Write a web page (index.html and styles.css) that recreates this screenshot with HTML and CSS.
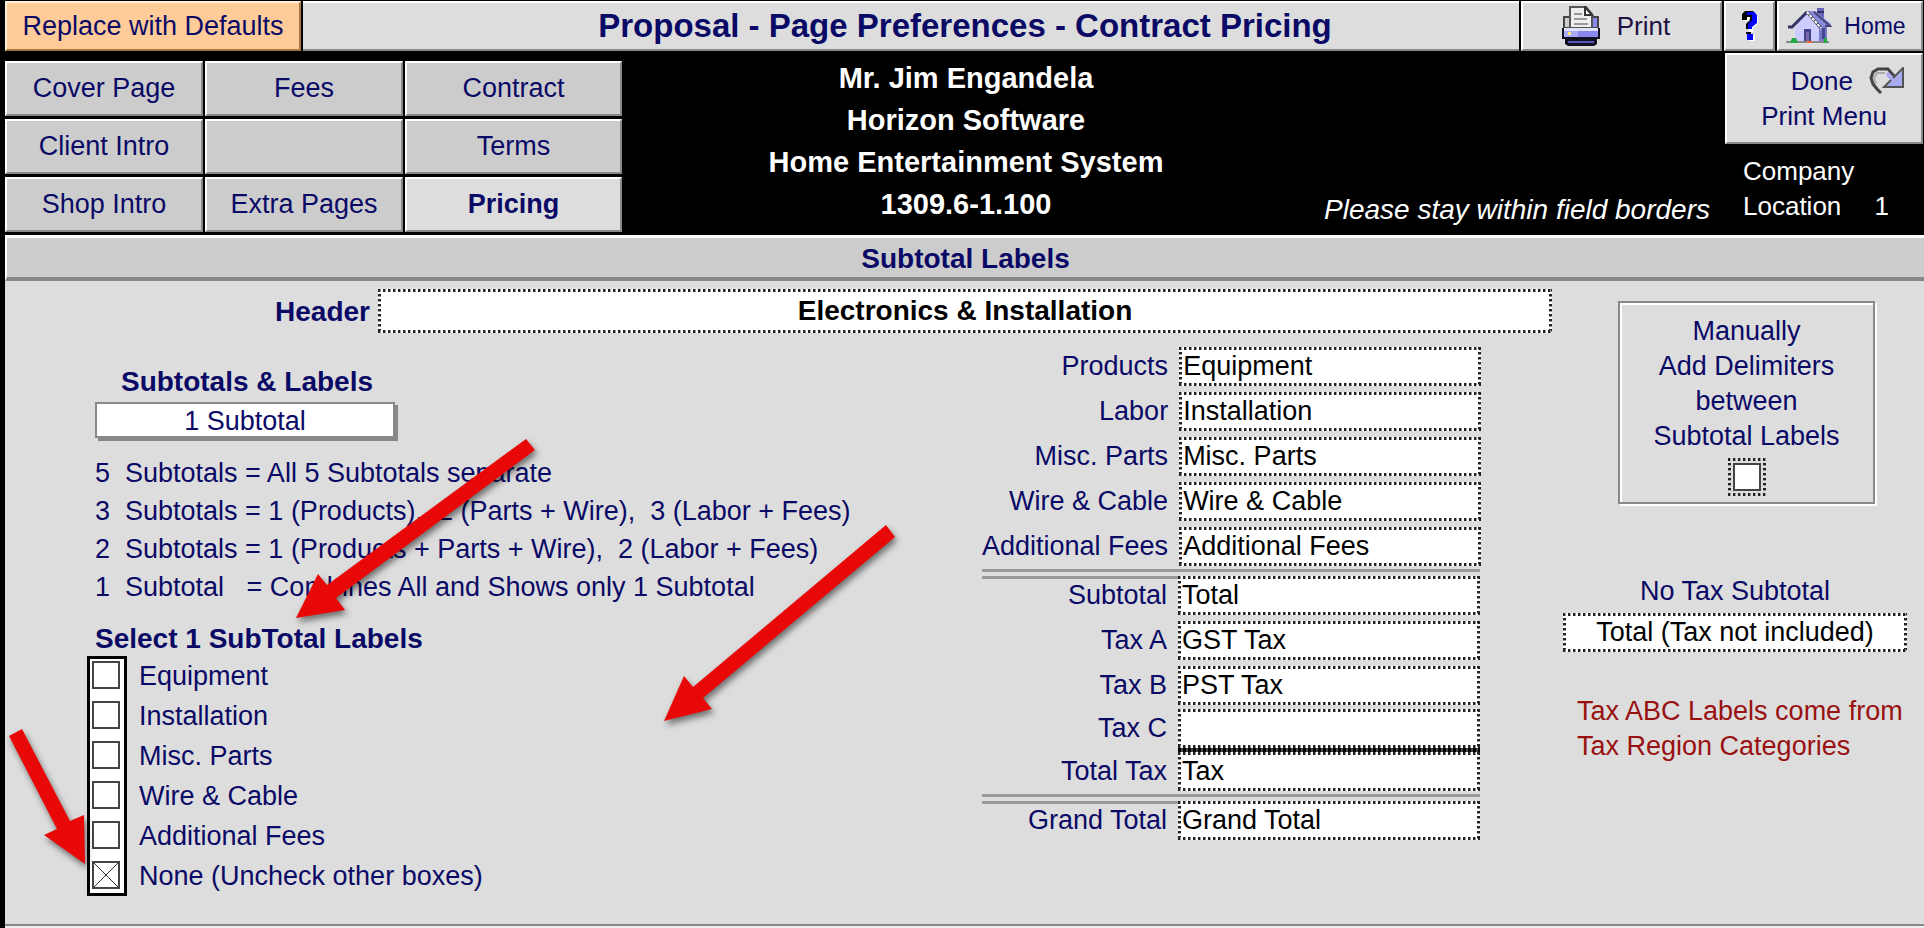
FILE: index.html
```html
<!DOCTYPE html>
<html lang="en">
<head>
    <meta charset="UTF-8">
    <meta name="viewport" content="width=device-width, initial-scale=1.0">
    <title>Proposal - Page Preferences - Contract Pricing</title>
    <link rel="stylesheet" href="styles.css">
</head>
<body>
    <header class="topbar">
        <button class="btn btn-defaults">Replace with Defaults</button>
        <h1 class="title">Proposal - Page Preferences - Contract Pricing</h1>
        <button class="btn btn-light btn-print">
            <svg class="icon" width="40" height="40" viewBox="0 0 40 40" aria-hidden="true">
                <path d="M3 11h6v11H3z" fill="#ccc" stroke="#444" stroke-width="2"/>
                <path d="M31 11h6v11h-6z" fill="#8888ee" stroke="#444" stroke-width="2"/>
                <path d="M9 1h16l6 7v14H9z" fill="#eee" stroke="#555" stroke-width="2"/>
                <path d="M24 1v8h7z" fill="#fff" stroke="#333" stroke-width="2"/>
                <path d="M13 8h8M13 13h13M13 18h14" stroke="#999" stroke-width="2"/>
                <path d="M1 22h38v11h-3v5l-3 2H7l-3-2v-5H1z" fill="#111122"/>
                <path d="M3 22h34v3H3z" fill="#e0e0ff"/>
                <path d="M3 25h34v6H3z" fill="#8888ee"/>
                <path d="M3 25h14v6H3z" fill="#aaaaff"/>
                <path d="M7 35h26v2H7z" fill="#5555bb"/>
                <path d="M7 26h3v3H7z" fill="#ffee66"/>
            </svg>
            Print
        </button>
        <button class="btn btn-light btn-help" aria-label="Help">
            <svg class="icon" width="18" height="32" viewBox="0 0 18 32" aria-hidden="true">
                <path d="M3 9V6l3-3h8l3 3v8l-5 4v4H8v-6l4-4V8H8v3H3zM8 25h6v6H8z" fill="#fff"/>
                <path d="M1 8V4l3-3h8l3 3v8l-5 4v3H5v-5l4-4V7H6v3H1zM5 22h5v2H5z" fill="#000"/>
                <path d="M6 2h7l3 3v8l-5 4v2H7v-5l4-4V5H6zM6 24h6v6H6z" fill="#0000ff"/>
            </svg>
        </button>
        <button class="btn btn-light btn-home">
            <svg class="icon" width="46" height="36" viewBox="0 0 46 36" aria-hidden="true">
                <path d="M31 0h7v16h-7z" fill="#6666bb"/>
                <path d="M31 4h7" stroke="#333366" stroke-width="2"/>
                <path d="M32 16h9v18h-9z" fill="#7777cc"/>
                <path d="M9 19L21 5l12 14v15H9z" fill="#ccccff"/>
                <path d="M20 3h9l16 13v3h-8l-2 4z" fill="#8888dd"/>
                <path d="M2 19h4L21 4" fill="none" stroke="#333366" stroke-width="3"/>
                <path d="M28 4l16 14h-5" fill="none" stroke="#444477" stroke-width="2"/>
                <path d="M21 4l14 16" stroke="#333344" stroke-width="3"/>
                <path d="M21 4l14 16" stroke="#fff" stroke-width="2" stroke-dasharray="3 1"/>
                <path d="M18 21h7v13h-7z" fill="#444488"/>
                <path d="M20 24h3v9h-3z" fill="#7766aa"/>
                <path d="M36 20h3v11h-3z" fill="#444488"/>
                <path d="M0 34h43" stroke="#888" stroke-width="2"/>
                <path d="M4 35l2-5h4l2 5zM38 35v-5h3v5z" fill="#22aa44"/>
                <path d="M21 33h5v2h-5z" fill="#ff6633"/>
            </svg>
            Home
        </button>
    </header>

    <section class="masthead">
        <nav class="pages">
            <button class="btn">Cover Page</button>
            <button class="btn">Fees</button>
            <button class="btn">Contract</button>
            <button class="btn">Client Intro</button>
            <button class="btn" aria-label="Blank"></button>
            <button class="btn">Terms</button>
            <button class="btn">Shop Intro</button>
            <button class="btn">Extra Pages</button>
            <button class="btn btn-light current">Pricing</button>
        </nav>
        <div class="client">
            <div>Mr. Jim Engandela</div>
            <div>Horizon Software</div>
            <div>Home Entertainment System</div>
            <div>1309.6-1.100</div>
        </div>
        <div class="hint">Please stay within field borders</div>
        <div class="side">
            <button class="btn btn-light btn-done">
                <span class="done-line">Done
                    <svg class="icon" width="36" height="28" viewBox="0 0 36 28" aria-hidden="true">
                        <path d="M12 26L8 22 4 17 2 11 4 5 9 2h10l6 7" fill="none" stroke="#444" stroke-width="3"/>
                        <path d="M7 17L5 11 8 6h8" fill="none" stroke="#aaa" stroke-width="2"/>
                        <path d="M18 6l6 7" stroke="#aaaaf0" stroke-width="4"/>
                        <path d="M34 1v19H15z" fill="#aaaaf0" stroke="#555" stroke-width="2"/>
                        <path d="M18 7l7 7" stroke="#aaaaf0" stroke-width="3"/>
                    </svg>
                </span>
                <span>Print Menu</span>
            </button>
            <div class="company">
                <div>Company</div>
                <div class="location"><span>Location</span><span>1</span></div>
            </div>
        </div>
    </section>

    <h2 class="section-bar">Subtotal Labels</h2>

    <main class="content">
        <div class="main-col">
            <div class="header-row">
                <label for="header">Header</label>
                <input class="field" type="text" id="header" value="Electronics &amp; Installation">
            </div>
            <div class="columns">
                <div class="options">
                    <label class="heading" for="subtotals">Subtotals &amp; Labels</label>
                    <select id="subtotals">
                        <option>5 Subtotals</option>
                        <option>3 Subtotals</option>
                        <option>2 Subtotals</option>
                        <option selected>1 Subtotal</option>
                    </select>
                    <div class="explain">5  Subtotals = All 5 Subtotals separate
3  Subtotals = 1 (Products),  2 (Parts + Wire),  3 (Labor + Fees)
2  Subtotals = 1 (Products + Parts + Wire),  2 (Labor + Fees)
1  Subtotal   = Combines All and Shows only 1 Subtotal</div>
                    <h3>Select 1 SubTotal Labels</h3>
                    <div class="checks">
                        <div class="check-boxes">
                            <input type="checkbox" id="c1">
                            <input type="checkbox" id="c2">
                            <input type="checkbox" id="c3">
                            <input type="checkbox" id="c4">
                            <input type="checkbox" id="c5">
                            <input type="checkbox" id="c6" checked>
                        </div>
                        <div class="check-labels">
                            <label for="c1">Equipment</label>
                            <label for="c2">Installation</label>
                            <label for="c3">Misc. Parts</label>
                            <label for="c4">Wire &amp; Cable</label>
                            <label for="c5">Additional Fees</label>
                            <label for="c6">None (Uncheck other boxes)</label>
                        </div>
                    </div>
                </div>

                <div class="labels-form">
                    <div class="group">
                        <label for="products">Products</label>
                        <input class="field" type="text" id="products" value="Equipment">
                        <label for="labor">Labor</label>
                        <input class="field" type="text" id="labor" value="Installation">
                        <label for="parts">Misc. Parts</label>
                        <input class="field" type="text" id="parts" value="Misc. Parts">
                        <label for="wire">Wire &amp; Cable</label>
                        <input class="field" type="text" id="wire" value="Wire &amp; Cable">
                        <label for="fees">Additional Fees</label>
                        <input class="field" type="text" id="fees" value="Additional Fees">
                    </div>
                    <div class="rule"></div>
                    <div class="group">
                        <label for="subtotal">Subtotal</label>
                        <input class="field" type="text" id="subtotal" value="Total">
                        <label for="taxa">Tax A</label>
                        <input class="field" type="text" id="taxa" value="GST Tax">
                        <label for="taxb">Tax B</label>
                        <input class="field" type="text" id="taxb" value="PST Tax">
                    </div>
                    <div class="group group-tight">
                        <label for="taxc">Tax C</label>
                        <input class="field" type="text" id="taxc" value="">
                        <div class="tax-line"></div>
                        <label for="totaltax">Total Tax</label>
                        <input class="field" type="text" id="totaltax" value="Tax">
                    </div>
                    <div class="rule"></div>
                    <div class="group">
                        <label for="grand">Grand Total</label>
                        <input class="field" type="text" id="grand" value="Grand Total">
                    </div>
                </div>
            </div>
        </div>

        <aside class="right-col">
            <div class="delimiters">
                <label for="delims">Manually<br>Add Delimiters<br>between<br>Subtotal Labels</label>
                <span class="field delims-box"><input type="checkbox" id="delims"></span>
            </div>
            <div class="no-tax">
                <label for="notax">No Tax Subtotal</label>
                <input class="field" type="text" id="notax" value="Total (Tax not included)">
            </div>
            <p class="note">Tax ABC Labels come from<br>Tax Region Categories</p>
        </aside>
    </main>
    <div class="bottom-edge"></div>

    <!-- red pointer arrows over the form -->
    <svg class="arrows" width="920" height="900" viewBox="0 0 920 900" aria-hidden="true">
        <path d="M526 439L535 450 336 598 345 610 296 618 318 574 327 585z"/>
        <path d="M886 525L895 537 703 698 712 709 664 721 684 676 693 687z"/>
        <path d="M9 736L22 729 70 821 84 815 85 864 44 835 57 829z"/>
    </svg>
</body>
</html>
```

FILE: styles.css
```css
:root {
    --navy: #0a0a66;
    --panel: #dddddd;
    --button: #cccccc;
    --shade: #888888;
    --dot: repeating-linear-gradient(90deg, #222 0 2px, #999 2px 3px, transparent 3px 5px);
    --dot-v: repeating-linear-gradient(180deg, #222 0 2px, #999 2px 3px, transparent 3px 5px);
}
* {
    box-sizing: border-box;
}
body {
    margin: 0;
    padding: 1px 0 0 5px;
    background-color: #000;
    color: var(--navy);
    font-family: "Liberation Sans", Arial, sans-serif;
    font-size: 27px;
    line-height: 35px;
    position: relative;
}
h1, h2, h3, p {
    margin: 0;
}
button, input, select {
    font: inherit;
    color: inherit;
}
label {
    white-space: nowrap;
}
.icon {
    display: block;
    flex: none;
}

/* bevelled buttons */
.btn {
    background-color: var(--button);
    border: 2px solid;
    border-color: #fff var(--shade) var(--shade) #fff;
    border-radius: 0;
    padding: 0;
    white-space: nowrap;
}
.btn-light {
    background-color: var(--panel);
}

.topbar {
    display: grid;
    grid-template-columns: 296px 1fr 201px 51px 146px;
    gap: 2px;
    height: 50px;
    padding-right: 1px;
}
.btn-defaults {
    background-color: #ffcc99;
    border-color: #fff0dd #aa7744 #aa7744 #fff0dd;
}
.title {
    background-color: var(--panel);
    border-top: 2px solid #fff;
    border-bottom: 2px solid var(--shade);
    padding-left: 108px;
    font-size: 33px;
    line-height: 46px;
    text-align: center;
}
.btn-print, .btn-help, .btn-home {
    display: flex;
    align-items: center;
    justify-content: center;
}
.btn-print {
    gap: 16px;
    padding-right: 12px;
    font-size: 26px;
    color: #221144;
}
.btn-home {
    gap: 12px;
    padding-right: 8px;
    font-size: 23px;
}

.masthead {
    display: grid;
    grid-template-columns: auto 1fr auto 198px;
    height: 184px;
    padding-right: 1px;
    color: #fff;
}
.masthead .btn {
    color: var(--navy);
}
.pages {
    display: grid;
    grid-template-columns: 198px 198px 217px;
    grid-template-rows: repeat(3, 55px);
    gap: 3px 2px;
    padding-top: 10px;
}
.pages .current {
    font-weight: bold;
}
.client {
    padding: 6px 14px 0 0;
    font-size: 29px;
    font-weight: bold;
    line-height: 42px;
    text-align: center;
}
.hint {
    align-self: end;
    padding: 0 15px 8px 0;
    font-size: 28px;
    font-style: italic;
}
.side {
    padding-top: 2px;
    font-size: 26px;
}
.btn-done {
    display: flex;
    flex-direction: column;
    align-items: center;
    justify-content: center;
    width: 100%;
    height: 91px;
}
.done-line {
    display: flex;
    align-items: center;
    align-self: flex-end;
    gap: 16px;
    padding-right: 16px;
}
.company {
    padding: 10px 34px 0 18px;
}
.location {
    display: flex;
    justify-content: space-between;
}

.section-bar {
    height: 46px;
    background-color: var(--button);
    border-top: 3px solid #fff;
    border-left: 2px solid #fff;
    border-bottom: 4px solid var(--shade);
    font-size: 28px;
    line-height: 42px;
    text-align: center;
}

.content {
    display: flex;
    min-height: 643px;
    padding: 8px 17px 0 0;
    background-color: var(--panel);
}
.bottom-edge {
    height: 4px;
    background-color: #eee;
    border-top: 2px solid var(--shade);
}

/* dotted entry fields */
.field {
    border: none;
    border-radius: 0;
    background: var(--dot) top / 100% 3px no-repeat,
                var(--dot) bottom / 100% 3px no-repeat,
                var(--dot-v) left / 3px 100% no-repeat,
                var(--dot-v) right / 3px 100% no-repeat,
                #fff;
    color: #000;
    width: 100%;
    min-width: 0;
    height: 39px;
    padding: 0 4px;
    outline: none;
}
.main-col {
    flex: 1;
}
.header-row {
    display: grid;
    grid-template-columns: 365px 1fr;
    gap: 8px;
    align-items: center;
    font-size: 28px;
    font-weight: bold;
    text-align: right;
}
.header-row .field {
    height: 44px;
    text-align: center;
}
.columns {
    display: flex;
    justify-content: space-between;
    padding: 14px 72px 0 0;
}

.options {
    padding: 17px 0 0 90px;
}
.heading {
    display: block;
    width: 304px;
    font-size: 28px;
    font-weight: bold;
    text-align: center;
}
select {
    appearance: none;
    display: block;
    width: 300px;
    height: 36px;
    margin-top: 3px;
    padding: 0;
    background-color: #fff;
    border: 2px solid var(--shade);
    border-radius: 0;
    box-shadow: 3px 3px 0 var(--shade);
    text-align: center;
    text-align-last: center;
}
.explain {
    margin-top: 16px;
    line-height: 38px;
    white-space: pre;
}
h3 {
    margin-top: 15px;
    font-size: 28px;
}
.checks {
    display: flex;
    gap: 12px;
    margin-left: -8px;
}
.check-boxes {
    display: flex;
    flex-direction: column;
    gap: 12px;
    padding: 2px 4px 2px 2px;
    background-color: #fff;
    border: 3px solid #000;
}
.check-labels {
    display: flex;
    flex-direction: column;
    line-height: 40px;
}
input[type="checkbox"] {
    appearance: none;
    display: block;
    width: 28px;
    height: 28px;
    margin: 0;
    background-color: #fff;
    border: 2px solid #444;
}
input[type="checkbox"]:checked {
    background-image: linear-gradient(45deg, transparent 48%, #333 48% 52%, transparent 52%),
                      linear-gradient(-45deg, transparent 48%, #333 48% 52%, transparent 52%);
}

.labels-form {
    width: 498px;
}
.group {
    display: grid;
    grid-template-columns: 1fr 302px;
    column-gap: 11px;
    row-gap: 6px;
    align-items: center;
    text-align: right;
}
.group-tight {
    row-gap: 0;
    margin-top: 4px;
}
.rule {
    height: 10px;
    margin: 3px 0 -3px;
    border-top: 3px solid #999;
    border-bottom: 3px solid #999;
}
.tax-line {
    grid-column: 2;
    height: 4px;
    background: repeating-linear-gradient(90deg, #000 0 3px, #444 3px 5px);
}

.right-col {
    display: flex;
    flex-direction: column;
    width: 344px;
    margin-left: 11px;
}
.delimiters {
    display: flex;
    flex-direction: column;
    align-items: center;
    width: 257px;
    height: 203px;
    margin: 12px 0 0 55px;
    padding-top: 11px;
    border: 2px solid var(--shade);
    box-shadow: 2px 2px 0 #fff, inset 2px 2px 0 #fff;
    text-align: center;
}
.delims-box {
    display: block;
    width: 38px;
    height: 38px;
    margin-top: 4px;
    padding: 5px;
    background-color: var(--panel);
}
.no-tax {
    margin-top: 70px;
    text-align: center;
}
.no-tax label {
    display: block;
    margin-bottom: 4px;
}
.no-tax .field {
    display: block;
    text-align: center;
}
.note {
    margin-top: 42px;
    padding-left: 14px;
    color: #991111;
    white-space: nowrap;
}

.arrows {
    position: absolute;
    top: 0;
    left: 0;
    fill: #e90808;
    filter: drop-shadow(2px 4px 3px rgba(0, 0, 0, 0.5));
    pointer-events: none;
}
```
